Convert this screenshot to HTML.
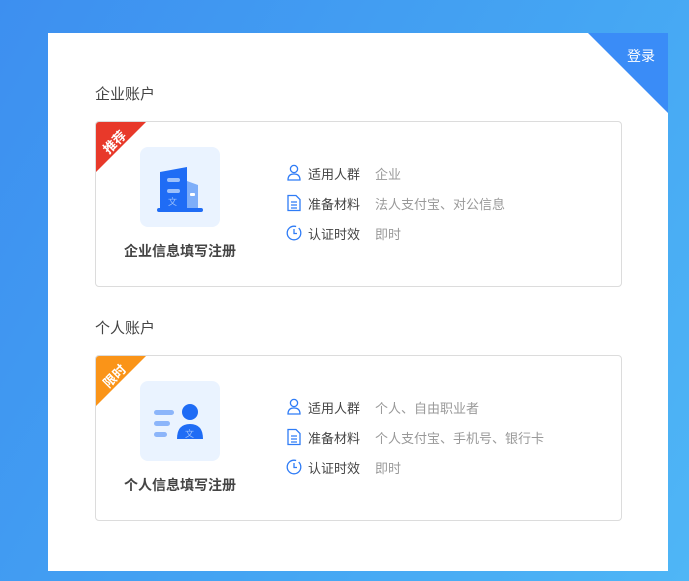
<!DOCTYPE html>
<html><head><meta charset="utf-8"><style>
*{margin:0;padding:0;box-sizing:border-box}
body{width:689px;height:581px;overflow:hidden;background:linear-gradient(120deg,#3d8ff0 0%,#45a6f3 60%,#4fb6f6 100%);font-family:"Liberation Sans","Noto Sans CJK SC",sans-serif;position:relative}
.panel{position:absolute;left:48px;top:33px;width:620px;height:538px;background:#fff;overflow:hidden}
.tri{position:absolute;right:0;top:0;width:0;height:0;border-top:80px solid #3a8cf7;border-left:80px solid transparent}
.login{position:absolute;right:13px;top:13px;color:#fff;font-size:14px}
.h{position:absolute;left:47px;font-size:15px;color:#444}
.card{position:absolute;left:47px;width:527px;height:166px;border:1px solid #dcdcdc;border-radius:4px;overflow:hidden}
.badge{position:absolute;left:0;top:0;width:0;height:0;border-top:50px solid #e8392a;border-right:50px solid transparent}
.bt{position:absolute;left:1px;top:10px;color:#fff;font-size:13px;font-weight:bold;transform:rotate(-45deg);width:34px;text-align:center}
.ib{position:absolute;left:44px;top:25px;width:80px;height:80px;background:#eaf3ff;border-radius:8px}
.lbl{position:absolute;left:0;width:168px;top:119px;text-align:center;font-size:14px;font-weight:bold;color:#444}
.row{position:absolute;left:190px;height:20px;font-size:13px;display:flex;align-items:center}
.row svg{width:16px;height:18px;margin-right:6px}
.k{color:#444;margin-right:15px}.v{color:#999}
</style></head><body>
<div class="panel">
<div class="tri"></div><div class="login">登录</div>
<div class="h" style="top:50px">企业账户</div>
<div class="card" style="top:88px">
<div class="badge"></div><div class="bt">推荐</div>
<div class="ib"><svg width="80" height="80" viewBox="0 0 80 80">
<path d="M20 25 L47 20 L47 62 L20 62Z" fill="#1f6cf5"/><path d="M47 34 L58 38 L58 62 L47 62Z" fill="#7eaef9"/>
<rect x="27" y="31" width="13" height="4" rx="2" fill="#9cc0fb"/><rect x="27" y="42" width="13" height="4" rx="2" fill="#9cc0fb"/>
<rect x="50" y="46" width="5" height="3" rx="1" fill="#fff"/><rect x="17" y="61" width="46" height="4" rx="2" fill="#1f6cf5"/>
<text x="28" y="58" font-size="9" fill="#9cc0fb">文</text></svg></div>
<div class="lbl">企业信息填写注册</div>
<div class="row" style="top:41px"><svg viewBox="0 0 16 18"><circle cx="8" cy="5" r="3.6" fill="none" stroke="#2f7cf6" stroke-width="1.3"/><path d="M2 16 Q2 10 8 10 Q14 10 14 16Z" fill="none" stroke="#2f7cf6" stroke-width="1.3"/></svg><span class="k">适用人群</span><span class="v">企业</span></div>
<div class="row" style="top:71px"><svg viewBox="0 0 16 18"><path d="M2 1.5H10L14 5.5V16.5H2Z" fill="none" stroke="#2f7cf6" stroke-width="1.3"/><path d="M5 8H11M5 11H11M5 14H11" stroke="#2f7cf6" stroke-width="1.2"/></svg><span class="k">准备材料</span><span class="v">法人支付宝、对公信息</span></div>
<div class="row" style="top:101px"><svg viewBox="0 0 16 18"><circle cx="8" cy="9" r="6.8" fill="none" stroke="#2f7cf6" stroke-width="1.3" stroke-dasharray="34 3"/><path d="M8 5V9.5H11" fill="none" stroke="#2f7cf6" stroke-width="1.3"/></svg><span class="k">认证时效</span><span class="v">即时</span></div>
</div>
<div class="h" style="top:284px">个人账户</div>
<div class="card" style="top:322px">
<div class="badge" style="border-top-color:#fa9418"></div><div class="bt">限时</div>
<div class="ib"><svg width="80" height="80" viewBox="0 0 80 80">
<rect x="14" y="29" width="20" height="5" rx="2.5" fill="#8cb5fa"/><rect x="14" y="40" width="16" height="5" rx="2.5" fill="#8cb5fa"/><rect x="14" y="51" width="13" height="5" rx="2.5" fill="#8cb5fa"/>
<circle cx="50" cy="31" r="8" fill="#1f6cf5"/><path d="M37 58 Q37 43 50 43 Q63 43 63 58Z" fill="#1f6cf5"/>
<text x="45" y="56" font-size="9" fill="#9cc0fb">文</text></svg></div>
<div class="lbl">个人信息填写注册</div>
<div class="row" style="top:41px"><svg viewBox="0 0 16 18"><circle cx="8" cy="5" r="3.6" fill="none" stroke="#2f7cf6" stroke-width="1.3"/><path d="M2 16 Q2 10 8 10 Q14 10 14 16Z" fill="none" stroke="#2f7cf6" stroke-width="1.3"/></svg><span class="k">适用人群</span><span class="v">个人、自由职业者</span></div>
<div class="row" style="top:71px"><svg viewBox="0 0 16 18"><path d="M2 1.5H10L14 5.5V16.5H2Z" fill="none" stroke="#2f7cf6" stroke-width="1.3"/><path d="M5 8H11M5 11H11M5 14H11" stroke="#2f7cf6" stroke-width="1.2"/></svg><span class="k">准备材料</span><span class="v">个人支付宝、手机号、银行卡</span></div>
<div class="row" style="top:101px"><svg viewBox="0 0 16 18"><circle cx="8" cy="9" r="6.8" fill="none" stroke="#2f7cf6" stroke-width="1.3" stroke-dasharray="34 3"/><path d="M8 5V9.5H11" fill="none" stroke="#2f7cf6" stroke-width="1.3"/></svg><span class="k">认证时效</span><span class="v">即时</span></div>
</div>
</div>
</body></html>
